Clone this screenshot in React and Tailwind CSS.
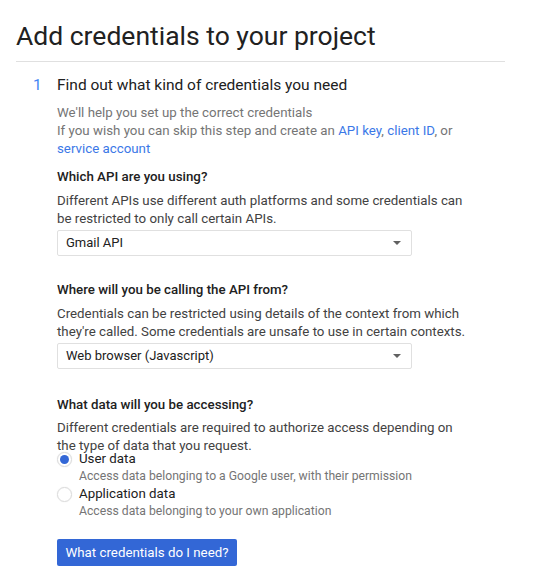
export default function App() {
  const font = { fontFamily: "Roboto, 'Liberation Sans', sans-serif" };
  const Arrow = () => (
    <svg width="8" height="4" viewBox="0 0 8 4" className="mr-[10px]">
      <path d="M0 0 L8 0 L4 4 Z" fill="#616161" />
    </svg>
  );
  return (
    <div className="w-[538px] h-[584px] bg-white overflow-hidden text-[#212121]" style={font}>
      <div className="pl-4 pr-[33px] pt-[19px]">
        <h1 className="text-[26.5px] leading-[34px] font-normal text-[#212121]">Add credentials to your project</h1>
        <div className="mt-[8px] h-px bg-[#e0e0e0]" />
      </div>
      <div className="flex pl-[33px] pt-[12px]">
        <div className="w-[24px] text-[15.5px] leading-[22px] text-[#4285f4]">1</div>
        <div className="flex-1">
          <div className="text-[15.5px] leading-[22px] text-[#212121]">Find out what kind of credentials you need</div>
          <div className="mt-[8px] text-[13.3px] leading-[18px] text-[#757575] w-[414px]">
            <div>We'll help you set up the correct credentials</div>
            <div>
              If you wish you can skip this step and create an{" "}
              <span className="text-[#3b78e7]">API key</span>,{" "}
              <span className="text-[#3b78e7]">client ID</span>, or{" "}
              <span className="text-[#3b78e7]">service account</span>
            </div>
          </div>

          <div className="mt-[10px] text-[13.3px] leading-[18px] font-medium text-[#212121]">Which API are you using?</div>
          <div className="mt-[6px] text-[13.3px] leading-[18px] text-[#424242] w-[414px]">
            Different APIs use different auth platforms and some credentials can be restricted to only call certain APIs.
          </div>
          <div className="mt-[2px] w-[355px] h-[26px] border border-[#e0e0e0] rounded-[2px] flex items-center justify-between pl-[8px] text-[13px] text-[#212121]">
            <span>Gmail API</span>
            <Arrow />
          </div>

          <div className="mt-[25px] text-[13.3px] leading-[18px] font-medium text-[#212121]">Where will you be calling the API from?</div>
          <div className="mt-[6px] text-[13.3px] leading-[18px] text-[#424242] w-[414px]">
            Credentials can be restricted using details of the context from which they're called. Some credentials are unsafe to use in certain contexts.
          </div>
          <div className="mt-[2px] w-[355px] h-[26px] border border-[#e0e0e0] rounded-[2px] flex items-center justify-between pl-[8px] text-[13px] text-[#212121]">
            <span>Web browser (Javascript)</span>
            <Arrow />
          </div>

          <div className="mt-[27px] text-[13.3px] leading-[18px] font-medium text-[#212121]">What data will you be accessing?</div>
          <div className="mt-[5px] text-[13.3px] leading-[18px] text-[#424242] w-[414px]">
            Different credentials are required to authorize access depending on the type of data that you request.
          </div>
          <div className="flex mt-[-5px]">
            <div className="w-[15px] h-[15px] mt-[2px] rounded-full border border-[#dadada] shadow-[0_0_1px_rgba(0,0,0,0.15)] flex items-center justify-center shrink-0">
              <div className="w-[9px] h-[9px] rounded-full bg-[#3367d6]" />
            </div>
            <div className="ml-[7px]">
              <div className="text-[13.3px] leading-[18px] text-[#212121]">User data</div>
              <div className="text-[12.2px] leading-[17px] text-[#757575]">Access data belonging to a Google user, with their permission</div>
            </div>
          </div>
          <div className="flex">
            <div className="w-[15px] h-[15px] mt-[2px] rounded-full border border-[#dadada] shadow-[0_0_1px_rgba(0,0,0,0.15)] shrink-0" />
            <div className="ml-[7px]">
              <div className="text-[13.3px] leading-[18px] text-[#212121]">Application data</div>
              <div className="text-[12.2px] leading-[17px] text-[#757575]">Access data belonging to your own application</div>
            </div>
          </div>
          <button className="mt-[19px] h-[27px] w-[180px] rounded-[2px] bg-[#3367d6] text-white text-[13.3px] leading-[27px] text-center" style={font}>
            What credentials do I need?
          </button>
        </div>
      </div>
    </div>
  );
}
